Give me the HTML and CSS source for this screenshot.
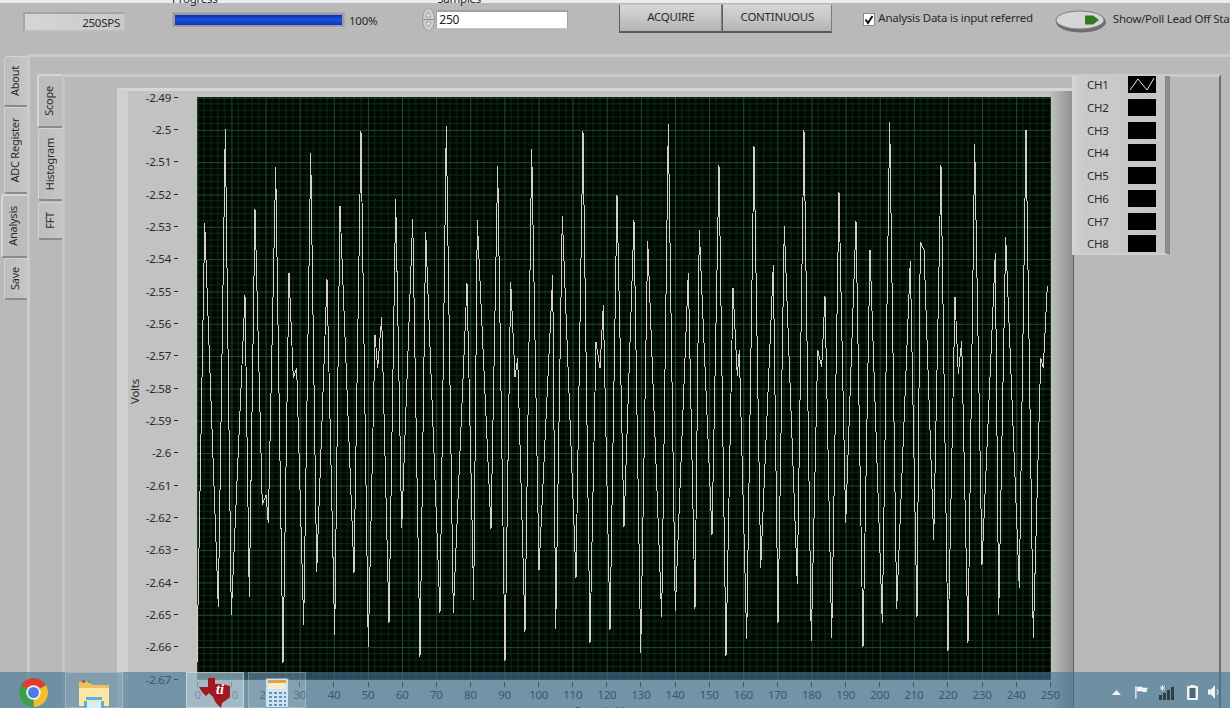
FILE: index.html
```html
<!DOCTYPE html>
<html lang="en">
<head>
<meta charset="utf-8">
<title>ADC Scope</title>
<link rel="stylesheet" href="styles.css">
</head>
<body>
<div class="app">
  <header class="toolbar">
    <output class="readout">250SPS</output>
    <div class="progress">
      <span class="field-label">Progress</span>
      <div class="progress-row">
        <div class="bar"><div class="bar-fill"></div></div>
        <span class="bar-text">100%</span>
      </div>
    </div>
    <div class="samples">
      <span class="field-label">Samples</span>
      <div class="samples-row">
        <div class="spinner">
          <svg width="13" height="23" viewBox="0 0 13 23"><ellipse cx="6.5" cy="11.5" rx="6" ry="11.5" fill="#cfcfcf" stroke="#9a9a9a"/><path d="M1 11.5h11" stroke="#8a8a8a"/><path d="M6.500 4l2.500 5h-5zM6.500 19l-2.500-5h5z" fill="#f2f2f2" stroke="#777" stroke-width=".6"/></svg>
        </div>
        <div class="num-input">250</div>
      </div>
    </div>
    <div class="buttons">
      <button class="btn acquire">ACQUIRE</button>
      <button class="btn">CONTINUOUS</button>
    </div>
    <label class="check">
      <svg class="check-box" width="12" height="13" viewBox="0 0 12 13"><rect x=".5" y=".5" width="11" height="12" fill="#fff" stroke="#8a8a8a"/><path d="M2.500 6.500l2.500 3.500 4.500-7" fill="none" stroke="#111" stroke-width="2"/></svg>
      <span>Analysis Data is input referred</span>
    </label>
    <div class="poll">
      <svg width="52" height="24" viewBox="0 0 52 24"><ellipse cx="26" cy="13" rx="25" ry="10.500" fill="#6d6d6d"/><ellipse cx="25" cy="11" rx="24" ry="9" fill="#d6d6d6" stroke="#7c7c7c"/><path d="M30 6.500h8l6 4.500-6 4.500h-8z" fill="#2f7a1f"/></svg>
      <span class="poll-text">Show/Poll Lead Off Status</span>
    </div>
  </header>

  <div class="outer">
    <nav class="tabs outer-tabs">
      <div class="tab about"><span>About</span></div>
      <div class="tab adc"><span>ADC Register</span></div>
      <div class="tab active analysis"><span>Analysis</span></div>
      <div class="tab save"><span>Save</span></div>
    </nav>
    <section class="outer-panel">
      <div class="inner">
        <nav class="tabs inner-tabs">
          <div class="tab active scope"><span>Scope</span></div>
          <div class="tab histogram"><span>Histogram</span></div>
          <div class="tab fft"><span>FFT</span></div>
        </nav>
        <section class="inner-panel">
          <div class="plot-panel">
            <div class="volts"><span>Volts</span></div>
            <div class="y-axis">
              <span>-2.49</span><span>-2.5</span><span>-2.51</span><span>-2.52</span><span>-2.53</span><span>-2.54</span><span>-2.55</span><span>-2.56</span><span>-2.57</span><span>-2.58</span><span>-2.59</span><span>-2.6</span><span>-2.61</span><span>-2.62</span><span>-2.63</span><span>-2.64</span><span>-2.65</span><span>-2.66</span><span>-2.67</span>
            </div>
            <div class="plot-col">
              <svg class="plot" width="854" height="583" viewBox="197 97 854 583">
                <defs>
                  <pattern id="grid" patternUnits="userSpaceOnUse" x="197.300" y="97.500" width="34.120" height="32.330">
                    <path d="M6.820 0V32.330M13.650 0V32.330M20.470 0V32.330M27.300 0V32.330M0 6.470H34.120M0 12.930H34.120M0 19.400H34.120M0 25.860H34.120" stroke="#0d2b13" stroke-width="1" fill="none"/>
                    <path d="M.5 0V32.330M0 .5H34.120" stroke="#1b5225" stroke-width="1" fill="none"/>
                  </pattern>
                </defs>
                <rect x="197" y="97" width="854" height="583" fill="#010603"/>
                <rect x="197" y="97" width="854" height="583" fill="url(#grid)"/>
                <polyline class="trace" points="197,663 204.700,223 218.300,607 225.300,129 231.300,615 245,295 249.300,597 255,209 262.300,505 266,495 268.300,523 275.700,167 283,663 289,273 293.300,378 296.700,368 303.700,625 310.700,153 316.700,572 327,279 334.700,635 340,206 354,573 361,131 368.300,647 375,335 377.700,368 381.700,317 389,623 395.700,199 401.700,528 412.700,219 420,657 425.700,232 440,613 446.300,126 453.300,613 467,283 473.700,600 477.300,220 491,529 497.700,166 505,661 510.700,282 515,377 517.700,358 525,632 531.700,149 539,570 552.700,275 555.700,629 562.300,216 576,578 583,131 590,643 596,342 600,368 603.300,305 610,630 617,195 624,527 634,220 640.700,653 647.700,241 661.700,617 668.300,124 675.300,611 688.300,273 695,609 699.300,230 712,535 719,165 726,656 733,288 737.300,376 739.300,350 746.700,639 754,146 760.700,568 773.300,265 778,623 784.300,226 797.300,584 804,130 811.300,641 817.700,350 821.700,367 825,296 831.700,638 839,192 845.700,523 856,221 863,647 870,250 882.300,623 889.700,122 896.700,609 910.300,261 917,617 920.300,242 924,250 933.700,540 941,165 948,651 955,297 958.300,374 961.700,341 968,643 974.700,144 982,565 995.300,253 998.700,615 1005.700,237 1019.300,588 1026,130 1033.300,638 1040.700,358 1043.300,368 1047.300,286"/>
              </svg>
              <div class="x-axis">
                <span>0</span><span>10</span><span>20</span><span>30</span><span>40</span><span>50</span><span>60</span><span>70</span><span>80</span><span>90</span><span>100</span><span>110</span><span>120</span><span>130</span><span>140</span><span>150</span><span>160</span><span>170</span><span>180</span><span>190</span><span>200</span><span>210</span><span>220</span><span>230</span><span>240</span><span>250</span>
              </div>
              <div class="x-title">Sample No.</div>
            </div>
          </div>
          <aside class="legend">
            <div class="legend-row"><span>CH1</span><svg class="swatch" width="28" height="17" viewBox="0 0 28 17"><rect width="28" height="17" fill="#000"/><path d="M2 14L10 3l9 11 7-12" fill="none" stroke="#e8e8e8"/></svg></div>
            <div class="legend-row"><span>CH2</span><div class="swatch"></div></div>
            <div class="legend-row"><span>CH3</span><div class="swatch"></div></div>
            <div class="legend-row"><span>CH4</span><div class="swatch"></div></div>
            <div class="legend-row"><span>CH5</span><div class="swatch"></div></div>
            <div class="legend-row"><span>CH6</span><div class="swatch"></div></div>
            <div class="legend-row"><span>CH7</span><div class="swatch"></div></div>
            <div class="legend-row"><span>CH8</span><div class="swatch"></div></div>
          </aside>
        </section>
      </div>
    </section>
  </div>

  <footer class="taskbar">
    <div class="task chrome">
      <svg width="29" height="29" viewBox="0 0 28 28">
        <path d="M14 14L1.880 7A14 14 0 0 1 26.120 7Z" fill="#d8412f"/>
        <path d="M14 14L26.120 7A14 14 0 0 1 14 28Z" fill="#f2c02c"/>
        <path d="M14 14L14 28A14 14 0 0 1 1.880 7Z" fill="#3d9f4c"/>
        <circle cx="14" cy="14" r="7" fill="#f1f1f1"/>
        <circle cx="14" cy="14" r="5.300" fill="#4a7fe0"/>
      </svg>
    </div>
    <div class="task lit folder">
      <svg width="32" height="30" viewBox="0 0 32 30">
        <path d="M1 4h11l2 3h17v21H1z" fill="#e9c45c"/>
        <path d="M1 10h30v18H1z" fill="#fbe7a4"/>
        <rect x="4" y="2" width="3" height="3" fill="#c9503c"/>
        <rect x="10" y="2" width="3" height="3" fill="#6aa84f"/>
        <path d="M8 19h16v3H8zM6 23h3v7H6zM23 23h3v7h-3z" fill="#57b1e4"/>
        <path d="M9 24h14v6H9z" fill="#d8ecf6"/>
      </svg>
    </div>
    <div class="task lit active-task">
      <svg width="32" height="30" viewBox="0 0 32 30">
        <path d="M9 0H16V6L23 6L31 8V19L26 23L23 25L22 30L17 25L14 19L10 15L7 18L3 14L0 9H9Z" fill="#a01820"/>
        <text x="17" y="16" class="ti">ti</text>
      </svg>
    </div>
    <div class="task lit calc">
      <svg width="24" height="30" viewBox="0 0 24 30">
        <rect x=".5" y=".5" width="23" height="29" rx="2" fill="#cfe3f1" stroke="#7aa6c6"/>
        <rect x="3" y="2" width="18" height="3" fill="#e9a044"/>
        <rect x="3" y="5" width="18" height="6" fill="#f5ebcf"/>
        <path d="M4 14h3v2H4zM9 14h3v2H9zM14 14h3v2h-3zM19 14h2v2h-2zM4 18h3v2H4zM9 18h3v2H9zM14 18h3v2h-3zM19 18h2v2h-2zM4 22h3v2H4zM9 22h3v2H9zM14 22h3v2h-3zM19 22h2v2h-2zM4 26h3v2H4zM9 26h3v2H9zM14 26h3v2h-3zM19 26h2v2h-2z" fill="#5f93ba"/>
      </svg>
    </div>
    <div class="tray">
      <svg class="tray-up" width="9" height="5" viewBox="0 0 9 5"><path d="M4.500 0L9 5H0z" fill="#f2f2f2"/></svg>
      <svg class="tray-flag" width="14" height="15" viewBox="0 0 16 15"><path d="M1 0v15" stroke="#f0f0f0" stroke-width="1.500"/><path d="M2 1h6l1 1h6l-2 3 1 2H9l-1-1H2z" fill="#f4f4f4"/></svg>
      <svg class="tray-net" width="17" height="15" viewBox="0 0 17 15"><path d="M1 10h3v5H1zM5 8h3v7H5zM9 5h3v10H9zM13 2h3v13h-3z" fill="#303d44"/><path d="M4.500 0v6M2 1.500l5 3M7 1.500l-5 3" stroke="#f0f0f0"/></svg>
      <svg class="tray-batt" width="11" height="15" viewBox="0 0 11 15"><path d="M3 1V0h5v1h3v14H0V1z" fill="#f0f0f0"/><rect x="2.500" y="3" width="6" height="10" fill="#4c6676"/></svg>
      <svg class="tray-vol" width="12" height="14" viewBox="0 0 12 14"><path d="M0 4.500h3L7 0v14L3 9.500H0z" fill="#f2f2f2"/><path d="M9 4q2 3 0 6" fill="none" stroke="#d8d8d8"/></svg>
    </div>
  </footer>
</div>
</body>
</html>
```

FILE: styles.css
```css
* { box-sizing: border-box; }
html, body { margin: 0; padding: 0; }
body { font-family: "Noto Sans", "Open Sans", sans-serif; font-size: 11.5px; letter-spacing: -0.25px; color: #2a2a2a; }

.app {
  position: relative;
  width: 1230px;
  height: 708px;
  overflow: hidden;
  background: #b9b9b9;
}

/* top toolbar */
.toolbar {
  display: flex;
  align-items: flex-start;
  height: 54px;
  border-top: 3px solid #ececec;
  padding-left: 23px;
}
.toolbar > * { flex: none; }
.readout {
  display: block;
  width: 103px;
  height: 20px;
  margin-top: 9px;
  padding-right: 4px;
  line-height: 18px;
  text-align: right;
  background: linear-gradient(90deg, #d6d6d6, #c9c9c9);
  border: 2px solid #a4a4a4;
  border-right-color: #bdbdbd;
  border-bottom-color: #bdbdbd;
}
.field-label {
  display: block;
  height: 16px;
  margin-top: -16px;
  line-height: 16px;
  white-space: nowrap;
}
.progress { margin-left: 46px; margin-top: 4px; }
.progress-row { display: flex; align-items: flex-start; margin-top: 5px; }
.bar {
  width: 173px;
  height: 16px;
  padding: 2px;
  background: #9c9c9c;
  border: 1px solid #a8a8a8;
  border-bottom-color: #bebebe;
}
.bar-fill {
  height: 100%;
  background: linear-gradient(180deg, #0a2fae 0, #1a52da 45%, #0b34b4 100%);
}
.bar-text { margin-left: 4px; margin-top: 2px; line-height: 14px; }
.samples { margin-left: 45px; margin-top: 4px; padding-left: 15px; }
.samples-row { display: flex; margin-top: 1px; margin-left: -15px; }
.spinner { width: 14px; height: 23px; }
.num-input {
  width: 132px;
  height: 19px;
  margin-top: 2px;
  padding-left: 2px;
  line-height: 16px;
  font-size: 12px;
  color: #222;
  background: #fff;
  border: 1px solid #a2a2a2;
  border-top-width: 2px;
  border-bottom-color: #c4c4c4;
}
.buttons { display: flex; margin-left: 51px; margin-top: 1px; }
.btn {
  height: 29px;
  padding: 0 0 3px;
  font: inherit;
  letter-spacing: -0.25px;
  color: #2a2a2a;
  background: linear-gradient(180deg, #d6d6d6 0, #c6c6c6 50%, #b4b4b4 100%);
  border: 1px solid #c8c8c8;
  border-left: 1px solid #5e5e5e;
  border-right: 1px solid #7c7c7c;
  border-bottom: 2px solid #5a5a5a;
  width: 110px;
}
.btn.acquire { width: 103px; }
.check {
  display: flex;
  align-items: flex-start;
  gap: 3px;
  margin-left: 31px;
  margin-top: 9px;
  white-space: nowrap;
}
.check-box { margin-top: 1px; flex: none; }
.check span { line-height: 13px; margin-top: -1px; }
.poll { display: flex; align-items: flex-start; margin-left: 22px; margin-top: 6px; white-space: nowrap; }
.poll-text { margin-left: 6px; margin-top: 3px; line-height: 14px; }

/* tabs */
.tabs { display: flex; flex-direction: column; flex: none; }
.tab {
  display: flex;
  align-items: center;
  justify-content: center;
  font-size: 11px;
  background: linear-gradient(90deg, #bdbdbd, #c6c6c6);
  border-top: 1px solid #d4d4d4;
  border-left: 1px solid #d2d2d2;
  border-bottom: 2px solid #8b8b8b;
  border-radius: 3px 0 0 3px;
}
.tab span { writing-mode: vertical-rl; transform: rotate(180deg); white-space: nowrap; }
.tab.active { background: #bcbcbc; border-left: 2px solid #d6d6d6; border-top: 2px solid #d6d6d6; }

.outer { display: flex; height: 654px; padding-left: 1px; }
.outer-tabs { width: 26px; padding-top: 2px; align-items: flex-end; }
.outer-tabs .tab { width: 23px; padding-right: 4px; }
.about { height: 51px; }
.adc { height: 87px; }
.outer-tabs .analysis { width: 26px; height: 64px; padding-right: 5px; }
.save { height: 42px; }

.outer-panel {
  flex: 1;
  border-top: 3px solid #cbcbcb;
  border-left: 3px solid #cbcbcb;
  padding: 17px 0 0 7px;
}
.inner { display: flex; height: 640px; }
.inner-tabs { width: 25px; align-items: flex-end; }
.inner-tabs .tab { width: 24px; padding-right: 3px; }
.inner-tabs .scope { width: 25px; height: 54px; padding-right: 5px; }
.histogram { height: 73px; }
.fft { height: 38px; margin-top: 1px; }

.inner-panel {
  display: flex;
  align-items: flex-start;
  width: 1159px;
  border-top: 3px solid #cbcbcb;
  border-left: 3px solid #c6c6c6;
  border-right: 2px solid #707070;
  padding-left: 52px;
}

/* plot */
.plot-panel {
  display: flex;
  align-items: flex-start;
  flex: none;
  width: 957px;
  height: 640px;
  margin-top: 11px;
  padding-top: 6px;
  background: linear-gradient(90deg, #c2c2c2 97.500%, #8f8f8f 100%);
  border-top: 3px solid #d6d6d6;
  border-left: 11px solid #d0d0d0;
  border-right: 1px solid #58646c;
}
.volts {
  display: flex;
  justify-content: center;
  width: 13px;
  margin-top: 282px;
}
.volts span { writing-mode: vertical-rl; transform: rotate(180deg); line-height: 13px; }
.y-axis {
  display: grid;
  grid-auto-rows: 32.33px;
  width: 37px;
  margin-top: -16px;
  flex: none;
}
.y-axis span {
  display: flex;
  align-items: center;
  justify-content: flex-end;
}
.y-axis span::after {
  content: "";
  width: 4px;
  height: 1px;
  margin-left: 3px;
  background: #2a2a2a;
}
.plot-col { width: 854px; margin-left: 19px; flex: none; }
.plot { display: block; }
.trace { fill: none; stroke: #d0d0d0; stroke-width: 1; shape-rendering: crispEdges; }
.x-axis {
  display: grid;
  grid-template-columns: repeat(26, 34.12px);
  width: 888px;
  margin-left: -16.500px;
  padding-top: 2px;
}
.x-axis span {
  display: flex;
  flex-direction: column;
  align-items: center;
  line-height: 15px;
}
.x-axis span::before {
  content: "";
  width: 1px;
  height: 5px;
  background: #2a2a2a;
}
.x-title { padding-right: 40px; text-align: center; line-height: 14px; margin-top: 2px; }

/* legend */
.legend {
  flex: none;
  display: grid;
  grid-auto-rows: 22.75px;
  width: 98px;
  height: 179px;
  margin-left: -2px;
  margin-top: -1px;
  padding: 0 9px 0 15px;
  background: linear-gradient(90deg, #d6d6d6 0, #cacaca 12%, #c6c6c6 100%);
  border-right: 5px solid #8b8b8b;
  border-bottom: 2px solid #d0d0d0;
}
.legend-row { display: flex; align-items: flex-start; justify-content: space-between; line-height: 17px; }
.swatch { display: block; width: 28px; height: 17px; background: #000; }

/* taskbar over the window */
.taskbar {
  position: absolute;
  left: 0;
  right: 0;
  bottom: 0;
  display: flex;
  height: 36px;
  padding-left: 4px;
  background: rgba(66, 118, 148, 0.62);
}
.task {
  display: flex;
  align-items: center;
  justify-content: center;
  width: 58px;
  height: 36px;
  padding-top: 5px;
}
.task.lit {
  background: rgba(255, 255, 255, 0.13);
  box-shadow: inset 0 0 0 1px rgba(255, 255, 255, 0.22);
}
.folder { margin-left: 3px; }
.task.active-task {
  margin-left: 63px;
  background: rgba(255, 255, 255, 0.34);
  box-shadow: inset 0 0 0 1px rgba(255, 255, 255, 0.4);
}
.calc { margin-left: 4px; }
.ti { font-family: "Liberation Serif", serif; font-style: italic; font-weight: 700; font-size: 14px; letter-spacing: 0; fill: #fff; }
.tray {
  display: flex;
  align-items: center;
  margin-left: auto;
  height: 36px;
  padding: 4px 10px 0 0;
}
.tray-up { margin-right: 14px; }
.tray-flag { margin-right: 9px; }
.tray-net { margin-right: 12px; }
.tray-batt { margin-right: 10px; }
```
